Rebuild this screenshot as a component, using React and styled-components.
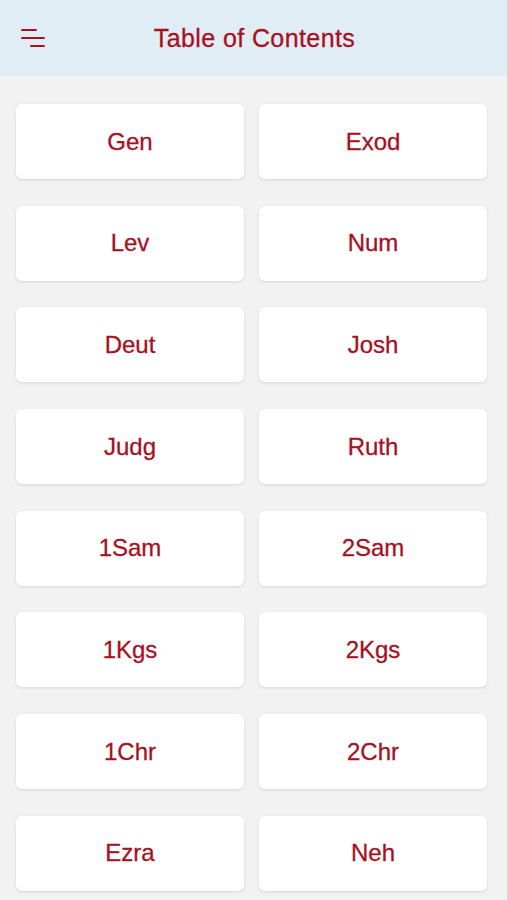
import React from "react";
import styled, { createGlobalStyle } from "styled-components";

const Global = createGlobalStyle`
  html, body { margin: 0; padding: 0; background: #f2f2f2; }
  body { font-family: "Liberation Sans", Arial, sans-serif; }
`;

const Page = styled.div`
  width: 507px;
  height: 900px;
  overflow: hidden;
  background: #f2f2f2;
`;

const Header = styled.header`
  height: 76px;
  background: #e1edf5;
  display: flex;
  align-items: center;
  justify-content: center;
  position: relative;
`;

const MenuButton = styled.button`
  position: absolute;
  left: 18px;
  top: 26px;
  width: 30px;
  height: 24px;
  padding: 0;
  border: 0;
  background: transparent;
`;

const Title = styled.h1`
  margin: 0 0 0 2px;
  font-size: 25px;
  font-weight: 400;
  letter-spacing: 0.4px;
  color: #a6111f;
  -webkit-text-stroke: 0.3px #a6111f;
`;

const Grid = styled.div`
  display: grid;
  grid-template-columns: 228px 228px;
  column-gap: 15px;
  row-gap: 26.7px;
  padding: 28px 20px 0 16px;
`;

const Card = styled.div`
  height: 75px;
  background: #fff;
  border-radius: 6px;
  box-shadow: 0 1px 3px rgba(0, 0, 0, 0.12);
  display: flex;
  align-items: center;
  justify-content: center;
  font-size: 24px;
  font-weight: 400;
  color: #a6111f;
  -webkit-text-stroke: 0.3px #a6111f;
`;

const books = ["Gen","Exod","Lev","Num","Deut","Josh","Judg","Ruth","1Sam","2Sam","1Kgs","2Kgs","1Chr","2Chr","Ezra","Neh"];

export default function App() {
  return (
    <Page>
      <Global />
      <Header>
        <MenuButton aria-label="menu">
          <svg width="30" height="24" viewBox="0 0 30 24">
            <g stroke="#a6111f" strokeWidth="2" strokeLinecap="round">
              <line x1="4" y1="4" x2="18" y2="4" />
              <line x1="4" y1="12" x2="26" y2="12" />
              <line x1="13" y1="20" x2="26" y2="20" />
            </g>
          </svg>
        </MenuButton>
        <Title>Table of Contents</Title>
      </Header>
      <Grid>
        {books.map((b) => (
          <Card key={b}>{b}</Card>
        ))}
      </Grid>
    </Page>
  );
}
